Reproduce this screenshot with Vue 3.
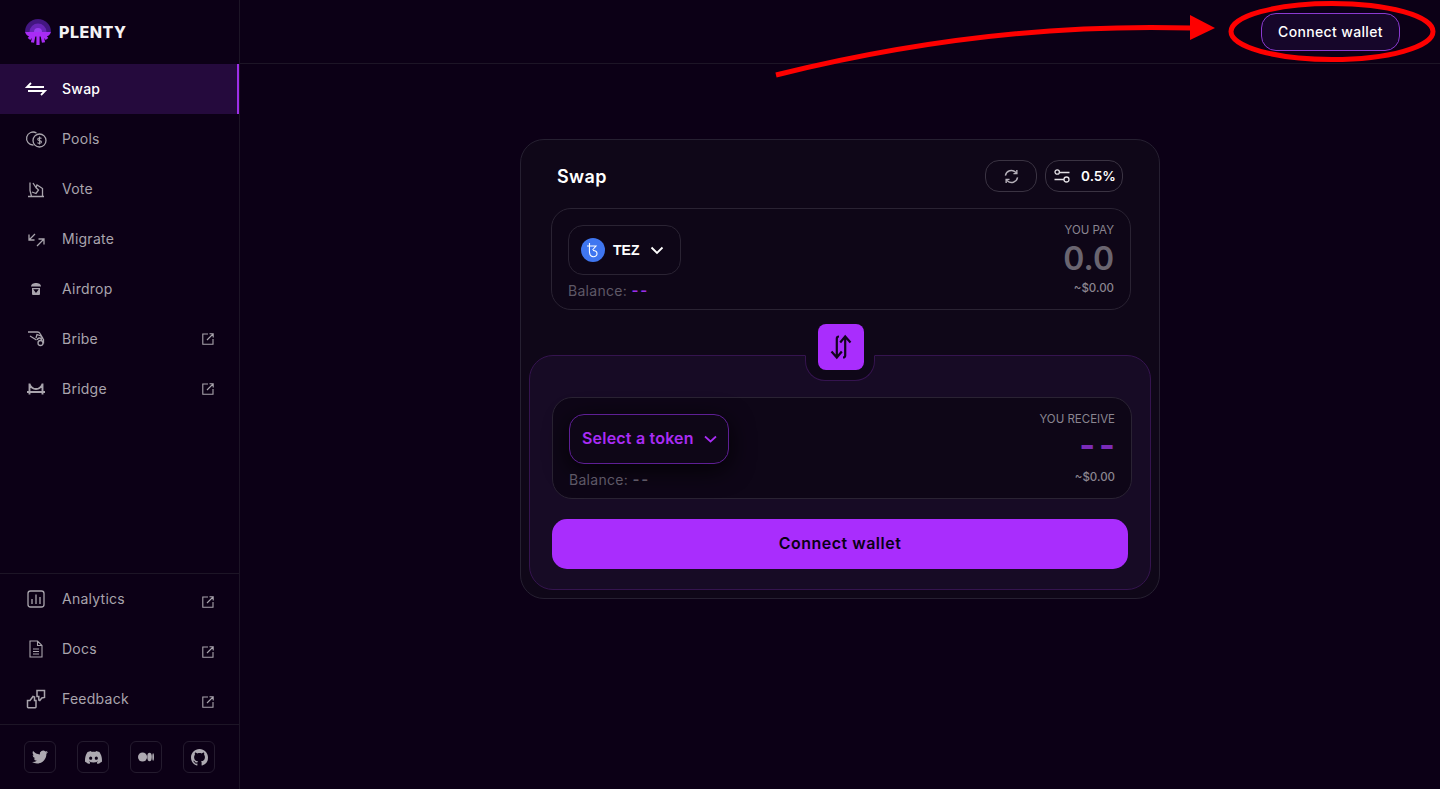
<template>
  <div class="app">
    <aside class="sidebar">
      <div class="logo">
        <svg width="26" height="26" viewBox="0 0 26 26" fill="none">
          <path d="M0 13a13 13 0 0 1 26 0z" fill="#431681" />
          <path d="M4.500 13a8.500 8.500 0 0 1 17 0z" fill="#6a25b8" />
          <path d="M9 13a4 4 0 0 1 8 0z" fill="#9a3cf0" />
          <path d="M0 13h26c-1 3-3 4.500-6 4.500H6c-3 0-5-1.500-6-4.500z" fill="#a92cf5" />
          <path d="M13 16v10M9 16 7.500 23.500M17 16l1.500 7.500M7 16l-3 4M19 16l3 4" stroke="#a92cf5" stroke-width="3.200" />
        </svg>
        <span class="logo-text">PLENTY</span>
      </div>
      <nav class="nav-main">
        <a v-for="item in mainNav" :key="item.label" :class="['nav-item', { active: item.active }]">
          <svg class="nav-icon" viewBox="0 0 24 24" v-html="item.icon"></svg>
          <span class="nav-label">{{ item.label }}</span>
          <svg v-if="item.external" class="ext-icon" viewBox="0 0 12 12">
            <path d="M6 1H.8v10.200H11V6M5 7l6-6M7.500.8h3.700v3.700" />
          </svg>
        </a>
      </nav>
      <nav class="nav-bottom">
        <a v-for="item in bottomNav" :key="item.label" class="nav-item">
          <svg class="nav-icon" viewBox="0 0 24 24" v-html="item.icon"></svg>
          <span class="nav-label">{{ item.label }}</span>
          <svg class="ext-icon low" viewBox="0 0 12 12">
            <path d="M6 1H.8v10.200H11V6M5 7l6-6M7.500.8h3.700v3.700" />
          </svg>
        </a>
      </nav>
      <div class="socials">
        <a class="social">
          <svg width="16" height="16" viewBox="0 0 24 24"><path d="M23.953 4.570a10 10 0 0 1-2.825.775 4.958 4.958 0 0 0 2.163-2.723c-.951.555-2.005.959-3.127 1.184a4.920 4.920 0 0 0-8.384 4.482C7.690 8.095 4.067 6.130 1.640 3.162a4.822 4.822 0 0 0-.666 2.475c0 1.710.870 3.213 2.188 4.096a4.904 4.904 0 0 1-2.228-.616v.060a4.923 4.923 0 0 0 3.946 4.827 4.996 4.996 0 0 1-2.212.085 4.936 4.936 0 0 0 4.604 3.417 9.867 9.867 0 0 1-6.102 2.105c-.390 0-.779-.023-1.170-.067a13.995 13.995 0 0 0 7.557 2.209c9.053 0 13.998-7.496 13.998-13.985 0-.210 0-.420-.015-.630A9.935 9.935 0 0 0 24 4.590z" /></svg>
        </a>
        <a class="social">
          <svg width="17" height="17" viewBox="0 0 24 24"><path d="M20.317 4.370a19.791 19.791 0 0 0-4.885-1.515.074.074 0 0 0-.079.037c-.211.375-.445.865-.608 1.250-1.845-.276-3.680-.276-5.487 0-.164-.393-.406-.874-.618-1.250a.077.077 0 0 0-.079-.037 19.736 19.736 0 0 0-4.885 1.515.070.070 0 0 0-.032.028C.533 9.046-.319 13.580.099 18.058a.082.082 0 0 0 .031.056c2.053 1.508 4.041 2.423 5.993 3.029a.078.078 0 0 0 .084-.027c.462-.631.873-1.296 1.226-1.995a.076.076 0 0 0-.042-.105c-.653-.248-1.274-.550-1.872-.893a.077.077 0 0 1-.008-.127c.126-.095.252-.193.372-.292a.074.074 0 0 1 .078-.010c3.928 1.793 8.180 1.793 12.061 0a.074.074 0 0 1 .079.009c.120.099.246.198.373.293a.077.077 0 0 1-.007.127 12.299 12.299 0 0 1-1.873.892.077.077 0 0 0-.041.106c.360.698.772 1.363 1.225 1.994a.076.076 0 0 0 .084.028c1.961-.606 3.950-1.522 6.002-3.029a.077.077 0 0 0 .032-.055c.500-5.177-.838-9.674-3.549-13.660a.061.061 0 0 0-.031-.029zM8.020 15.331c-1.183 0-2.157-1.086-2.157-2.419s.956-2.419 2.157-2.419c1.211 0 2.176 1.095 2.157 2.419 0 1.333-.956 2.419-2.157 2.419zm7.975 0c-1.183 0-2.157-1.086-2.157-2.419s.955-2.419 2.157-2.419c1.211 0 2.176 1.095 2.157 2.419 0 1.333-.946 2.419-2.157 2.419z" /></svg>
        </a>
        <a class="social">
          <svg width="16" height="16" viewBox="0 0 24 24"><ellipse cx="6.800" cy="12" rx="6.800" ry="6.800" /><ellipse cx="17.300" cy="12" rx="3.400" ry="6.300" /><ellipse cx="22.700" cy="12" rx="1.300" ry="5.600" /></svg>
        </a>
        <a class="social">
          <svg width="17" height="17" viewBox="0 0 16 16"><path d="M8 0C3.580 0 0 3.580 0 8c0 3.540 2.290 6.530 5.470 7.590.4.070.550-.170.550-.380 0-.190-.010-.820-.010-1.490-2.010.370-2.530-.490-2.690-.940-.090-.230-.480-.940-.820-1.130-.280-.150-.680-.520-.010-.530.630-.010 1.080.580 1.230.820.720 1.210 1.870.870 2.330.660.070-.520.280-.870.510-1.070-1.780-.2-3.640-.890-3.640-3.950 0-.870.310-1.590.820-2.150-.080-.2-.360-1.020.080-2.120 0 0 .670-.210 2.200.820.640-.180 1.320-.270 2-.270s1.360.090 2 .270c1.530-1.040 2.200-.820 2.200-.820.440 1.100.160 1.920.080 2.120.510.560.820 1.270.820 2.150 0 3.070-1.870 3.750-3.650 3.950.290.250.540.730.540 1.480 0 1.070-.010 1.930-.010 2.200 0 .210.150.460.550.380A8.013 8.013 0 0 0 16 8c0-4.420-3.580-8-8-8z" /></svg>
        </a>
      </div>
    </aside>

    <div class="content">
      <header class="topbar">
        <button class="wallet-btn">Connect wallet</button>
      </header>
      <main class="main">
        <section class="card">
          <div class="card-head">
            <h2 class="card-title">Swap</h2>
            <div class="head-actions">
              <button class="pill refresh">
                <svg width="15" height="15" viewBox="0 0 16 16" fill="none" stroke="#b5b0b9" stroke-width="1.500">
                  <path d="M1.500 7a6.500 6.500 0 0 1 11-3.500l1 1.200M14.500 9a6.500 6.500 0 0 1-11 3.500l-1-1.200" />
                  <path d="M13.700 1v3.900h-3.600M2.300 15v-3.900h3.600" />
                </svg>
              </button>
              <button class="pill slippage">
                <svg width="16" height="14" viewBox="0 0 16 14" fill="none" stroke="#e2dfe4" stroke-width="1.300">
                  <circle cx="3.200" cy="3" r="2.200" />
                  <path d="M5.400 3.500H15.500M.5 10.500h9.500" />
                  <circle cx="12.500" cy="10.500" r="2.500" />
                </svg>
                <span>0.5%</span>
              </button>
            </div>
          </div>

          <div class="box pay-box">
            <div class="box-left">
              <button class="token-btn">
                <span class="tez-icon">
                  <svg width="14" height="16" viewBox="0 0 14 16" fill="none" stroke="#fff" stroke-width="1.100">
                    <path d="M3.500 1v2.500c0 1-.2 5 0 7 .2 2.500 1.500 4 3.800 4.200 2.200.1 3.700-1.300 3.700-3s-1.600-3.200-4-3.200" />
                    <path d="M1 4h9L6.500 8" />
                  </svg>
                </span>
                <span class="token-name">TEZ</span>
                <svg class="chev" width="14" height="9" viewBox="0 0 14 9" fill="none" stroke="#fff" stroke-width="1.800"><path d="M1.500 1.500 7 7l5.500-5.500" /></svg>
              </button>
              <div class="balance">Balance: <span class="dash dash-purple">--</span></div>
            </div>
            <div class="box-right">
              <div class="box-label">YOU PAY</div>
              <div class="amount">0.0</div>
              <div class="usd">~$0.00</div>
            </div>
          </div>

          <div class="panel">
            <div class="notch"></div>
            <button class="flip-btn">
              <svg width="24" height="26" viewBox="0 0 24 26" fill="none" stroke="#12041f" stroke-width="2.200">
                <path d="M10 2.500c-1.500 0-2.200.8-2.200 2v18.500M2.500 17.500 7.800 23.500l5-6" />
                <path d="M14 23.500c1.500 0 2.200-.8 2.200-2V3M11.200 8.500 16.200 2.500l5.300 6" />
              </svg>
            </button>
            <div class="box receive-box">
              <div class="box-left">
                <button class="select-btn">
                  <span class="select-text">Select a token</span>
                  <svg width="13" height="8" viewBox="0 0 13 8" fill="none" stroke="#a92cf5" stroke-width="1.700"><path d="M1 1.500 6.500 6.500l5.500-5" /></svg>
                </button>
                <div class="balance">Balance: <span class="dash">--</span></div>
              </div>
              <div class="box-right">
                <div class="box-label">YOU RECEIVE</div>
                <div class="amount-empty">--</div>
                <div class="usd usd-receive">~$0.00</div>
              </div>
            </div>
            <button class="connect-btn"><span class="connect-text">Connect wallet</span></button>
          </div>
        </section>
      </main>
    </div>

    <!-- annotation drawn over the screenshot -->
    <svg class="annotation" width="1440" height="100" viewBox="0 0 1440 100" fill="none">
      <path d="M776 75Q990 22 1192 28" stroke="#fe0000" stroke-width="5" />
      <path d="M1190 15l25 13-25 12z" fill="#fe0000" />
      <ellipse cx="1332" cy="31.500" rx="101" ry="28" stroke="#fe0000" stroke-width="5" />
    </svg>
  </div>
</template>

<script setup>
const mainNav = [
  {
    label: 'Swap',
    active: true,
    icon: '<path d="M7 6 3 10h17M4 14h17l-4 4" fill="none" stroke="#fff" stroke-width="1.800"/>'
  },
  {
    label: 'Pools',
    icon: '<path d="M12.500 6A6.500 6.500 0 1 0 9.500 18" fill="none"/><circle cx="15.500" cy="13.500" r="6.500" fill="none"/><path d="M17.500 11.500c-.6-.8-3.800-1-3.800.8 0 1.800 3.800 .9 3.800 2.700 0 1.700-3.200 1.500-4 .6M15.500 9.500v8" fill="none" stroke-width="1.100"/>'
  },
  {
    label: 'Vote',
    icon: '<path d="M4 19.500h16M18.500 19.500v-8l-3-2-2.500-1.500-1 2.500-3-4.500M6 5.500v8l1.500 6M8 15l4 1.500 2.500-3.500-3-3" fill="none"/>'
  },
  {
    label: 'Migrate',
    icon: '<path d="M11 7 5 13M5 7.500V13h5.500M13 19l7-7M14.500 12H20v5.500" fill="none"/>'
  },
  {
    label: 'Airdrop',
    icon: '<path d="M7 9.500C7 7 9.500 6 12 6s5 1 5 3.500z" fill="#a9a4ad" stroke="none"/><path d="M8 11h8v6a1 1 0 0 1-1 1H9a1 1 0 0 1-1-1z" fill="#a9a4ad" stroke="none"/><path d="M10.500 13h3L12 15z" fill="#0c0016" stroke="#0c0016"/>'
  },
  {
    label: 'Bribe',
    external: true,
    icon: '<path d="M4 5h9.500c1 0 2 .5 2.500 1.500l3 5M6 9l6.500 4M12 11l1-3.500 4 1.500 2.500 3.500v4M13.500 13a2 2 0 0 1 4 0M14 16a2.500 2.500 0 1 0 5 0 2.500 2.500 0 1 0-5 0" fill="none"/>'
  },
  {
    label: 'Bridge',
    external: true,
    icon: '<path d="M5.500 6.500v11M18.500 6.500v11M3 15h18M5.500 7c1.500 3.500 3.500 5 6.500 5s5-1.500 6.500-5" fill="none" stroke-width="1.900"/>'
  }
]

const bottomNav = [
  {
    label: 'Analytics',
    icon: '<rect x="4" y="4" width="16" height="16" rx="2.500" fill="none"/><path d="M8 17v-5M12 17V7.500M16 17v-7" fill="none"/>'
  },
  {
    label: 'Docs',
    icon: '<path d="M6 4h7.500L18 8.500V20H6zM13.500 4v4.500H18M9 12h6M9 14.500h6M9 17h6" fill="none" stroke-width="1.100"/>'
  },
  {
    label: 'Feedback',
    icon: '<path d="M3.500 13.500H6l3-4 1.500.5v3.500H12V20a.7.7 0 0 1-.7.7H4.200a.7.7 0 0 1-.7-.7zM13 3.500h7.500v7l-2.700.5-2 2.500-1-.5V9.500H13z" fill="none" stroke-width="1.500"/>'
  }
]
</script>

<style scoped>
.app {
  position: relative;
  display: flex;
  height: 100vh;
  overflow: hidden;
  background: #0c0016;
  color: #fff;
  font-family: Inter, "Liberation Sans", sans-serif;
}

.sidebar {
  display: flex;
  flex-direction: column;
  flex: none;
  width: 240px;
  box-sizing: border-box;
  border-right: 1px solid #1d1526;
}

.logo {
  display: flex;
  align-items: center;
  gap: 8px;
  height: 64px;
  padding-left: 25px;
  box-sizing: border-box;
  flex: none;
}

.logo-text {
  font-size: 16px;
  font-weight: 800;
  letter-spacing: 0.5px;
  color: #f4f2f5;
}

.nav-main {
  flex: 1;
}

.nav-item {
  display: flex;
  align-items: center;
  height: 50px;
  padding: 0 24px;
  color: #a9a4ad;
  font-size: 14px;
  letter-spacing: 0.25px;
  box-sizing: border-box;
}

.nav-item.active {
  background: #250a3d;
  border-right: 2px solid #9d2fe8;
  color: #fff;
  font-weight: 500;
}

.nav-icon {
  width: 24px;
  height: 24px;
  margin-right: 14px;
  flex: none;
  stroke: #a9a4ad;
  stroke-width: 1.300;
}

.nav-label {
  flex: 1;
  padding-bottom: 2px;
}

.ext-icon {
  width: 12px;
  height: 12px;
  margin-right: 1px;
  fill: none;
  stroke: #a9a4ad;
  stroke-width: 1.100;
}

.ext-icon.low {
  margin-top: 6px;
}

.nav-bottom {
  flex: none;
  border-top: 1px solid #1d1526;
  border-bottom: 1px solid #1d1526;
}

.socials {
  display: flex;
  gap: 21px;
  flex: none;
  height: 64px;
  padding: 16px 24px 0;
  box-sizing: border-box;
}

.social {
  display: flex;
  align-items: center;
  justify-content: center;
  width: 32px;
  height: 32px;
  box-sizing: border-box;
  border: 1px solid #241b2e;
  border-radius: 6px;
  fill: #aeaab2;
}

.content {
  flex: 1;
  min-width: 0;
}

.topbar {
  display: flex;
  align-items: center;
  justify-content: flex-end;
  height: 64px;
  padding-right: 40px;
  box-sizing: border-box;
  border-bottom: 1px solid #1d1526;
}

.wallet-btn {
  width: 139px;
  height: 38px;
  padding: 0;
  border: 1px solid #8a3ad0;
  border-radius: 15px;
  background: #16062a;
  color: #fff;
  font: 500 14px Inter, "Liberation Sans", sans-serif;
  letter-spacing: 0.35px;
}

.main {
  display: flex;
  justify-content: center;
  padding-top: 75px;
}

.card {
  width: 640px;
  height: 460px;
  box-sizing: border-box;
  border: 1px solid #262031;
  border-radius: 24px;
  background: #0f0718;
}

.card-head {
  display: flex;
  align-items: center;
  justify-content: space-between;
  height: 68px;
  padding: 4px 36px 0;
  box-sizing: border-box;
}

.card-title {
  margin: 0;
  font-size: 18px;
  font-weight: 600;
  letter-spacing: 0.4px;
}

.head-actions {
  display: flex;
  gap: 8px;
}

.pill {
  display: flex;
  align-items: center;
  justify-content: center;
  height: 32px;
  padding: 0;
  border: 1px solid #3a3342;
  border-radius: 14px;
  background: transparent;
  color: #fff;
  font: 600 13.500px Inter, "Liberation Sans", sans-serif;
}

.refresh {
  width: 52px;
}

.slippage {
  width: 78px;
  gap: 11px;
  padding-left: 2px;
}

.box {
  display: flex;
  justify-content: space-between;
  height: 102px;
  box-sizing: border-box;
  padding: 16px;
  border: 1px solid #2a2333;
  border-radius: 20px;
  background: #0e0617;
}

.pay-box {
  margin: 0 28px 0 30px;
}

.token-btn {
  display: flex;
  align-items: center;
  width: 113px;
  height: 50px;
  padding: 0 12px;
  box-sizing: border-box;
  border: 1px solid #2a2333;
  border-radius: 15px;
  background: transparent;
  color: #fff;
}

.tez-icon {
  display: flex;
  align-items: center;
  justify-content: center;
  flex: none;
  width: 24px;
  height: 24px;
  border-radius: 50%;
  background: #3f76f0;
}

.token-name {
  margin-left: 8px;
  font-size: 14px;
  font-weight: 600;
}

.chev {
  margin-left: 11px;
}

.balance {
  margin-top: 7px;
  font-size: 14px;
  line-height: 18px;
  color: #5e5866;
  letter-spacing: 0.3px;
}

.dash {
  font-size: 15px;
  font-weight: 600;
  letter-spacing: 2px;
}

.dash-purple {
  color: #9a2ee8;
}

.box-right {
  display: flex;
  flex-direction: column;
  align-items: flex-end;
  margin-top: -2px;
}

.box-label {
  font-size: 11.500px;
  line-height: 14px;
  color: #8a8590;
}

.amount {
  margin-top: 4px;
  font-size: 32px;
  line-height: 36px;
  font-weight: 600;
  color: #6a6570;
}

.usd {
  margin-top: 4px;
  font-size: 11.500px;
  line-height: 14px;
  font-weight: 500;
  color: #8a8590;
}

.usd-receive {
  margin-top: 7px;
}

.panel {
  position: relative;
  margin: 45px 8px 0;
  padding: 41px 18px 20px 22px;
  border: 1px solid #35144f;
  border-radius: 24px;
  background: #170b25;
  height: 235px;
  box-sizing: border-box;
}

.notch {
  position: absolute;
  top: -1px;
  left: 275px;
  width: 70px;
  height: 26px;
  box-sizing: border-box;
  border: 1px solid #35144f;
  border-top: 1px solid #0f0718;
  border-radius: 0 0 20px 20px;
  background: #0f0718;
}

.flip-btn {
  position: absolute;
  top: -32px;
  left: 288px;
  display: flex;
  align-items: center;
  justify-content: center;
  width: 46px;
  height: 46px;
  padding: 0;
  border: none;
  border-radius: 8px;
  background: #a92dfd;
}

.select-btn {
  display: flex;
  align-items: center;
  justify-content: space-between;
  width: 160px;
  height: 50px;
  padding: 0 11px 0 12px;
  box-sizing: border-box;
  border: 1px solid #5e1f95;
  border-radius: 15px;
  background: #0e0617;
  box-shadow: 0 6px 24px rgba(0, 0, 0, 0.8);
  color: #a92cf5;
  font: 600 16px Inter, "Liberation Sans", sans-serif;
  letter-spacing: 0.2px;
}

.select-text {
  padding-bottom: 2px;
}

.amount-empty {
  margin-top: 1px;
  font-size: 34px;
  line-height: 36px;
  font-weight: 700;
  letter-spacing: 4px;
  margin-right: -4px;
  color: #7a2bb8;
}

.connect-btn {
  display: block;
  width: 576px;
  height: 50px;
  margin-top: 20px;
  padding: 0;
  border: none;
  border-radius: 15px;
  background: #a92dfd;
  color: #0a0014;
  font: 600 16px Inter, "Liberation Sans", sans-serif;
  letter-spacing: 0.5px;
}

.connect-text {
  display: block;
  padding-bottom: 2px;
}

.annotation {
  position: absolute;
  top: 0;
  left: 0;
  pointer-events: none;
}
</style>
